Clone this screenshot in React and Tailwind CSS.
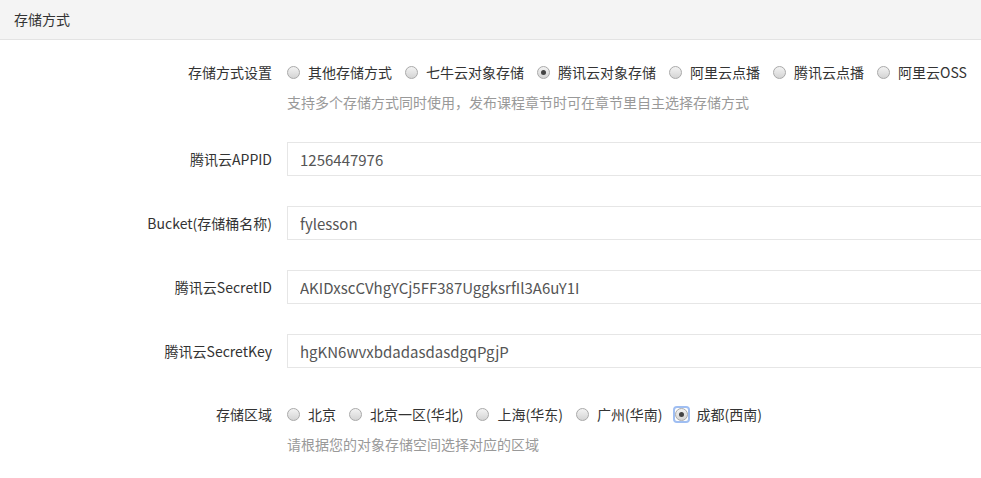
import React from 'react';

const font = { fontFamily: '"Microsoft YaHei", "Noto Sans CJK SC", "Noto Sans", sans-serif' };

const Radio = ({ label, checked, focused }) => (
    <label className="flex items-center gap-[8px] mr-[13px] cursor-pointer">
        <span className={`flex items-center justify-center ${focused ? 'outline outline-2 outline-[#9fbef2] rounded-[2px]' : ''}`}>
            <span className="w-[13px] h-[13px] rounded-full border border-[#a9a9a9] bg-gradient-to-b from-[#f3f3f3] to-[#d4d4d4] flex items-center justify-center">
                {checked && <span className="w-[5px] h-[5px] rounded-full bg-[#444]" />}
            </span>
        </span>
        <span className="text-[14px] text-[#333] leading-[20px]">{label}</span>
    </label>
);

const Row = ({ label, children, className = "" }) => (
    <div className={`flex items-start ${className}`}>
        <div className="w-[272px] shrink-0 text-right text-[14px] text-[#333] leading-[20px]">{label}</div>
        <div className="ml-[15px] flex-1 min-w-0">{children}</div>
    </div>
);

const Field = ({ label, value, className = "" }) => (
    <div className={`flex items-center ${className}`}>
        <div className="w-[272px] shrink-0 text-right text-[14px] text-[#333]">{label}</div>
        <div className="ml-[15px] flex-1 min-w-0 -mr-[10px]">
            <input
                readOnly
                value={value}
                className="w-full h-[34px] border border-[#e6e6e6] px-[12px] text-[15px] text-[#555] outline-none bg-white"
                style={font}
            />
        </div>
    </div>
);

export default function App() {
    const types = ['其他存储方式', '七牛云对象存储', '腾讯云对象存储', '阿里云点播', '腾讯云点播', '阿里云OSS'];
    const regions = ['北京', '北京一区(华北)', '上海(华东)', '广州(华南)', '成都(西南)'];

    return (
        <div className="w-[981px] h-[478px] bg-white overflow-hidden" style={font}>
            <div className="h-[40px] bg-[#f4f4f4] border-b border-[#e3e3e3] px-[14px] flex items-center text-[14px] text-[#333]">
                存储方式
            </div>

            <Row label="存储方式设置" className="mt-[22px]">
                <div className="flex items-center whitespace-nowrap">
                    {types.map((t, i) => (
                        <Radio key={t} label={t} checked={i === 2} />
                    ))}
                </div>
                <p className="mt-[10px] text-[14px] leading-[20px] text-[#999]">
                    支持多个存储方式同时使用，发布课程章节时可在章节里自主选择存储方式
                </p>
            </Row>

            <Field label="腾讯云APPID" value="1256447976" className="mt-[30px]" />
            <Field label="Bucket(存储桶名称)" value="fylesson" className="mt-[30px]" />
            <Field label="腾讯云SecretID" value="AKIDxscCVhgYCj5FF387UggksrfIl3A6uY1I" className="mt-[30px]" />
            <Field label="腾讯云SecretKey" value="hgKN6wvxbdadasdasdgqPgjP" className="mt-[30px]" />

            <Row label="存储区域" className="mt-[36px]">
                <div className="flex items-center whitespace-nowrap">
                    {regions.map((r, i) => (
                        <Radio key={r} label={r} checked={i === 4} focused={i === 4} />
                    ))}
                </div>
                <p className="mt-[10px] text-[14px] leading-[20px] text-[#999]">
                    请根据您的对象存储空间选择对应的区域
                </p>
            </Row>
        </div>
    );
}
